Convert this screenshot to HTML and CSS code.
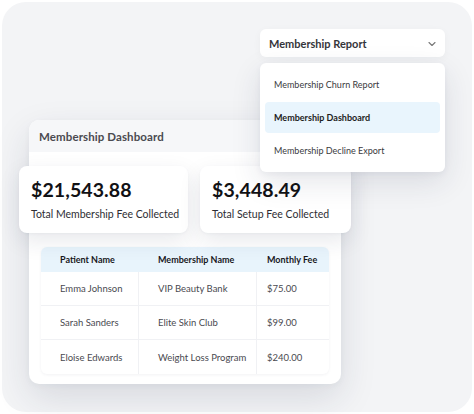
FILE: index.html
```html
<!DOCTYPE html>
<html lang="en">
<head>
<meta charset="utf-8">
<title>Membership Dashboard</title>
<link rel="stylesheet" href="styles.css">
</head>
<body>
<div class="frame">
  <div class="select-wrap">
    <div class="select">
      <span>Membership Report</span>
      <svg class="chev" width="8" height="6" viewBox="0 0 8 6"><path d="M1 1.5 L4 4.5 L7 1.5" fill="none" stroke="#777" stroke-width="1.1" stroke-linecap="round" stroke-linejoin="round"/></svg>
    </div>
    <div class="menu">
      <div class="item">Membership Churn Report</div>
      <div class="item active">Membership Dashboard</div>
      <div class="item">Membership Decline Export</div>
    </div>
  </div>

  <div class="dashboard">
    <div class="dash-head">Membership Dashboard</div>
    <div class="stats">
      <div class="stat stat-1">
        <div class="amount">$21,543.88</div>
        <div class="label">Total Membership Fee Collected</div>
      </div>
      <div class="stat stat-2">
        <div class="amount">$3,448.49</div>
        <div class="label">Total Setup Fee Collected</div>
      </div>
    </div>
    <div class="table">
      <div class="row head">
        <div class="c c1">Patient Name</div>
        <div class="c c2">Membership Name</div>
        <div class="c c3">Monthly Fee</div>
      </div>
      <div class="row">
        <div class="c c1">Emma Johnson</div>
        <div class="c c2">VIP Beauty Bank</div>
        <div class="c c3">$75.00</div>
      </div>
      <div class="row">
        <div class="c c1">Sarah Sanders</div>
        <div class="c c2">Elite Skin Club</div>
        <div class="c c3">$99.00</div>
      </div>
      <div class="row last">
        <div class="c c1">Eloise Edwards</div>
        <div class="c c2">Weight Loss Program</div>
        <div class="c c3">$240.00</div>
      </div>
    </div>
  </div>
</div>
</body>
</html>
```
FILE: styles.css
```css
* { box-sizing: border-box; }
html, body { margin: 0; padding: 0; background: #ffffff; }
body {
  font-family: "Lato", "Noto Sans", sans-serif;
  color: #222;
  width: 474px;
  height: 414px;
  overflow: hidden;
}
.frame {
  margin: 2px;
  width: 470px;
  height: 410px;
  background: #f3f4f6;
  border-radius: 24px;
  padding-top: 27px;
  position: relative;
}
.select-wrap {
  position: relative;
  margin-left: 258px;
  width: 185px;
  z-index: 3;
}
.select {
  height: 28px;
  background: #ffffff;
  border-radius: 6px;
  display: flex;
  align-items: center;
  justify-content: space-between;
  padding: 0 9px 0 9px;
  font-size: 11px;
  font-weight: 700;
  color: #35353a;
  box-shadow: 0 2px 8px rgba(30, 40, 60, 0.04);
}
.chev { display: block; margin-top: 1px; }
.menu {
  position: absolute;
  top: 34px;
  left: 0;
  width: 185px;
  height: 109px;
  background: #ffffff;
  border-radius: 6px;
  box-shadow: 0 10px 30px rgba(30, 40, 70, 0.12), 0 2px 6px rgba(30, 40, 70, 0.05);
  padding: 6px 5px 0 5px;
  display: flex;
  flex-direction: column;
}
.item {
  height: 31px;
  display: flex;
  align-items: center;
  padding-left: 9px;
  font-size: 9px;
  color: #3a3a40;
  border-radius: 4px;
  margin-bottom: 2px;
}
.item.active {
  background: #e9f5fd;
  color: #1d1d22;
  font-weight: 700;
}
.dashboard {
  margin-left: 27px;
  margin-top: 63px;
  width: 312px;
  height: 264px;
  background: #ffffff;
  border-radius: 10px;
  box-shadow: 0 14px 36px rgba(30, 40, 70, 0.13), 0 2px 6px rgba(30, 40, 70, 0.04);
  position: relative;
  z-index: 1;
}
.dash-head {
  height: 32px;
  background: #f6f7f9;
  border-radius: 10px 10px 0 0;
  padding-left: 10px;
  display: flex;
  align-items: center;
  font-size: 11.5px;
  font-weight: 700;
  color: #4a4a50;
  letter-spacing: 0.1px;
}
.stats {
  display: flex;
  gap: 12px;
  margin-left: -10px;
  margin-top: 14px;
  position: relative;
  z-index: 2;
}
.stat {
  flex-shrink: 0;
  height: 67px;
  background: #ffffff;
  border-radius: 8px;
  box-shadow: 0 8px 22px rgba(30, 40, 70, 0.10), 0 1px 3px rgba(30, 40, 70, 0.04);
  padding: 12px 0 0 12px;
}
.stat-1 { width: 169px; }
.stat-2 { width: 151px; }
.amount {
  font-size: 19.5px;
  font-weight: 700;
  color: #111114;
  line-height: 24px;
  letter-spacing: 0.1px;
}
.label {
  margin-top: 6px;
  font-size: 10.5px;
  color: #2e2e33;
  line-height: 13px;
}
.table {
  margin: 14px 12px 0 12px;
  width: 288px;
  border-radius: 6px;
  background: #ffffff;
  box-shadow: 0 1px 3px rgba(30, 40, 70, 0.06);
  overflow: hidden;
}
.row {
  display: flex;
  height: 34px;
  border-bottom: 1px solid #f0f1f4;
}
.row.last { border-bottom: none; }
.row.head {
  height: 25px;
  background: #e8f4fc;
  border-bottom: none;
}
.c {
  display: flex;
  align-items: center;
  font-size: 9.5px;
  color: #4a4a50;
}
.row.head .c {
  font-size: 9px;
  font-weight: 700;
  color: #18181c;
}
.c1 { width: 98px; padding-left: 19px; border-right: 1px solid #f0f1f4; }
.c2 { width: 118px; padding-left: 19px; border-right: 1px solid #f0f1f4; }
.c3 { flex: 1; padding-left: 10px; }
.row.head .c1, .row.head .c2 { border-right: none; }
```
